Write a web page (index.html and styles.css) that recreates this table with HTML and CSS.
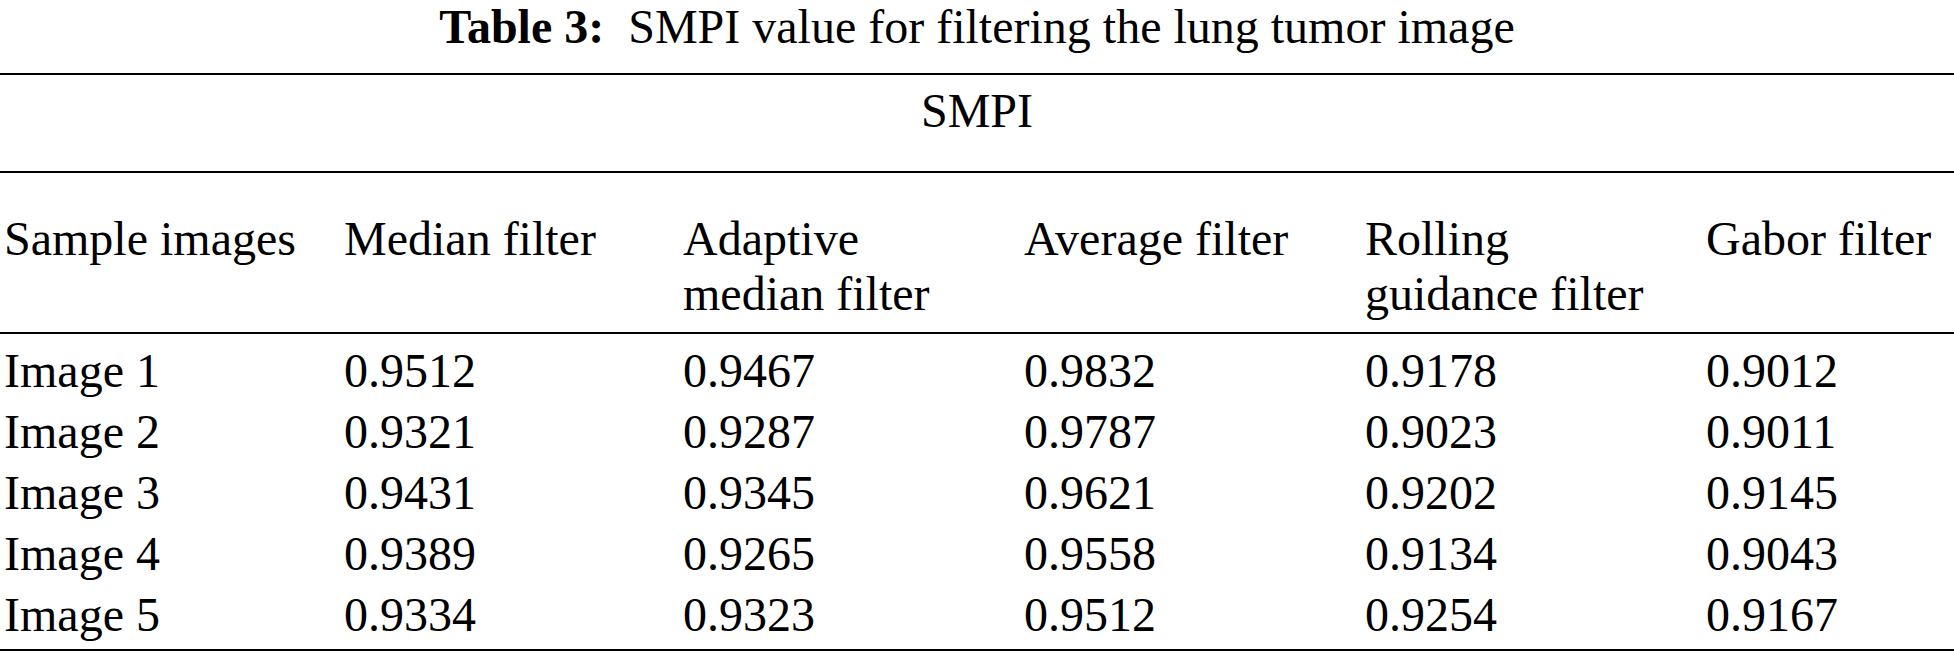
FILE: index.html
```html
<!DOCTYPE html>
<html lang="en">
<head>
<meta charset="utf-8">
<title>Table 3: SMPI value for filtering the lung tumor image</title>
<link rel="stylesheet" href="styles.css">
</head>
<body>
<div class="title"><b>Table 3:</b>&nbsp; SMPI value for filtering the lung tumor image</div>
<table class="data">
  <colgroup>
    <col class="c1"><col class="c2"><col class="c3"><col class="c4"><col class="c5"><col class="c6">
  </colgroup>
  <thead>
    <tr class="group">
      <th colspan="6">SMPI</th>
    </tr>
    <tr class="head">
      <th class="first">Sample images</th>
      <th>Median filter</th>
      <th>Adaptive median filter</th>
      <th>Average filter</th>
      <th>Rolling guidance filter</th>
      <th class="last">Gabor filter</th>
    </tr>
  </thead>
  <tbody>
    <tr><td class="first">Image 1</td><td>0.9512</td><td>0.9467</td><td>0.9832</td><td>0.9178</td><td class="last">0.9012</td></tr>
    <tr><td class="first">Image 2</td><td>0.9321</td><td>0.9287</td><td>0.9787</td><td>0.9023</td><td class="last">0.9011</td></tr>
    <tr><td class="first">Image 3</td><td>0.9431</td><td>0.9345</td><td>0.9621</td><td>0.9202</td><td class="last">0.9145</td></tr>
    <tr><td class="first">Image 4</td><td>0.9389</td><td>0.9265</td><td>0.9558</td><td>0.9134</td><td class="last">0.9043</td></tr>
    <tr><td class="first">Image 5</td><td>0.9334</td><td>0.9323</td><td>0.9512</td><td>0.9254</td><td class="last">0.9167</td></tr>
  </tbody>
</table>
</body>
</html>
```

FILE: styles.css
```css
html, body {
  margin: 0;
  padding: 0;
  background: #ffffff;
}

body {
  font-family: "Liberation Serif", "Times New Roman", serif;
  font-size: 48px;
  color: #000000;
}

.title {
  height: 54px;
  line-height: 54px;
  text-align: center;
  margin-bottom: 19px;
  white-space: nowrap;
}

.title b {
  font-weight: 700;
}

.data {
  width: 100%;
  border-collapse: separate;
  border-spacing: 0;
  table-layout: fixed;
}

.c1 { width: 344px; }
.c2 { width: 339px; }
.c3 { width: 341px; }
.c4 { width: 341px; }
.c5 { width: 341px; }

.data th,
.data td {
  font-weight: 400;
  text-align: left;
  vertical-align: top;
  padding: 0 30px 0 0;
  line-height: 55px;
}

.data .first {
  padding-left: 4px;
}

.data .last {
  padding-right: 0;
  white-space: nowrap;
}

.group th {
  text-align: center;
  padding: 8px 0 33px 0;
  border-top: 2px solid #000;
  border-bottom: 2px solid #000;
}

.head th {
  padding-top: 38px;
  padding-bottom: 11px;
  border-bottom: 2px solid #000;
}

.data tbody td {
  line-height: 61px;
}

.data tbody tr:first-child td {
  padding-top: 6px;
}

.data tbody tr:last-child td {
  padding-bottom: 4px;
  border-bottom: 2px solid #000;
}
```
